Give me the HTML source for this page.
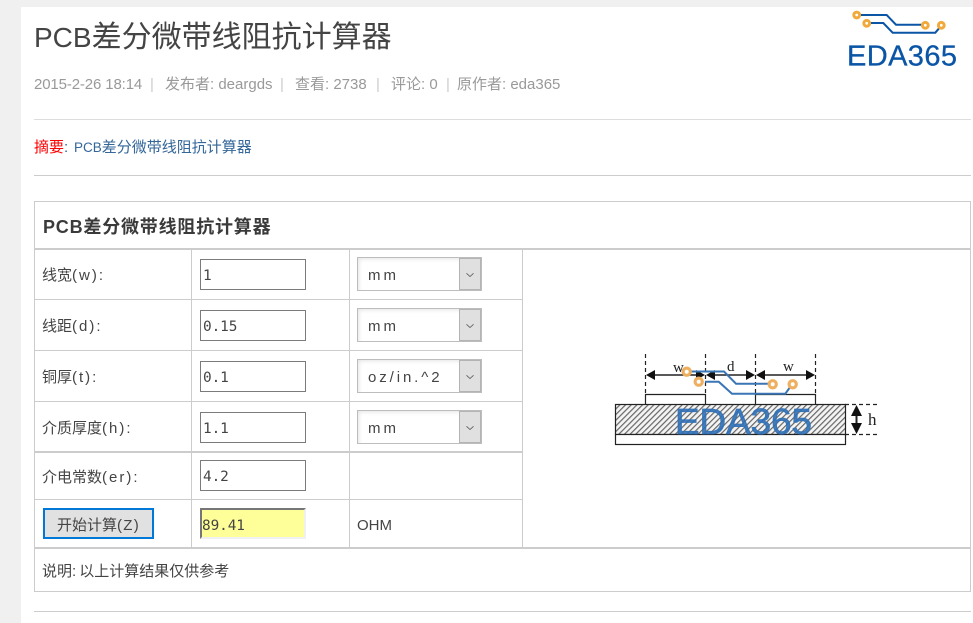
<!DOCTYPE html>
<html lang="zh">
<head>
<meta charset="utf-8">
<title>PCB差分微带线阻抗计算器</title>
<style>
html,body{margin:0;padding:0;width:973px;height:623px;overflow:hidden;background:#f0f0f0}
body{position:relative;font-family:"Liberation Sans","Noto Sans CJK SC",sans-serif;color:#444}
.a{position:absolute;white-space:nowrap}
.l{position:absolute;background:#ccc}
#page{position:absolute;left:21px;top:7px;width:952px;height:616px;background:#fff}
.t{font-size:15px;color:#444;line-height:20px}
.t b{font-weight:400;letter-spacing:2px}
.m{top:75px;font-size:15px;line-height:20px;color:#999}
.m span{position:absolute;color:#ccc;top:0}
.in{position:absolute;left:200px;height:29px;border:1px solid #7b7b7b;background:#fff;font:14.4px/32px "DejaVu Sans Mono","Liberation Mono",monospace;letter-spacing:-.1px;color:#444;padding-left:2px;width:102px;overflow:hidden}
.sel{position:absolute;left:357px;width:123px;height:32px;border:1px solid #bdbdbd;background:#fff;box-shadow:inset 3px 3px 4px -2px #e4e4e4;font-size:15px;line-height:36px;color:#444}
.sel span{position:absolute;left:10px;top:0;letter-spacing:3px;white-space:nowrap}
.sel i{position:absolute;right:0;top:0;width:20px;height:30px;border:1px solid #b4b4b4;background:#e0e0e0}
.sel svg{position:absolute;left:6px;top:14px}
</style>
</head>
<body>
<div id="page"></div>

<div class="a" style="left:34px;top:18px;font-size:30px;line-height:40px;color:#444"><span style="font-size:28px">PCB</span>差分微带线阻抗计算器</div>
<div class="a m" style="left:34px;letter-spacing:-.13px">2015-2-26 18:14<span style="left:116px">|</span></div>
<div class="a m" style="left:165px">发布者: deargds<span style="left:115px">|</span></div>
<div class="a m" style="left:295px">查看: 2738<span style="left:81px">|</span></div>
<div class="a m" style="left:391px">评论: 0<span style="left:55px">|</span></div>
<div class="a m" style="left:457px">原作者: eda365</div>

<svg class="a" style="left:820px;top:0" width="153" height="80" viewBox="820 0 153 80">
  <g fill="none" stroke="#0a55a5" stroke-width="2">
    <path d="M857 15H886.7L896 24.7H925"/>
    <path d="M867 23H883.3L892.7 32.7H935.3L941 26"/>
  </g>
  <g fill="#fff" stroke="#f2a93b" stroke-width="3">
    <circle cx="856.7" cy="15" r="2.9"/>
    <circle cx="866.7" cy="23.3" r="2.9"/>
    <circle cx="925.3" cy="25.3" r="2.9"/>
    <circle cx="941.3" cy="25.3" r="2.9"/>
  </g>
  <text x="847" y="65.5" font-family="Liberation Sans" font-size="29" fill="#0a55a5" stroke="#0a55a5" stroke-width=".3" textLength="110" lengthAdjust="spacing">EDA365</text>
</svg>

<div class="l" style="left:34px;top:119px;width:937px;height:1px;background:#ddd"></div>
<div class="a" style="left:34px;top:138px;font-size:15px;line-height:20px;color:#336699"><span style="color:#f00">摘要</span>:<span style="position:absolute;left:40px;top:0"><span style="font-size:13.5px">PCB</span>差分微带线阻抗计算器</span></div>
<div class="l" style="left:34px;top:175px;width:937px;height:1px"></div>

<!-- table frame -->
<div class="l" style="left:34px;top:201px;width:937px;height:1px"></div>
<div class="l" style="left:34px;top:201px;width:1px;height:391px"></div>
<div class="l" style="left:970px;top:201px;width:1px;height:391px"></div>
<div class="l" style="left:34px;top:591px;width:937px;height:1px"></div>
<div class="l" style="left:34px;top:248px;width:937px;height:2px"></div>
<div class="l" style="left:34px;top:547px;width:937px;height:2px"></div>
<div class="l" style="left:34px;top:299px;width:489px;height:1px"></div>
<div class="l" style="left:34px;top:350px;width:489px;height:1px"></div>
<div class="l" style="left:34px;top:401px;width:489px;height:1px"></div>
<div class="l" style="left:34px;top:451px;width:489px;height:2px"></div>
<div class="l" style="left:34px;top:499px;width:489px;height:1px"></div>
<div class="l" style="left:191px;top:249px;width:1px;height:299px"></div>
<div class="l" style="left:349px;top:249px;width:1px;height:299px"></div>
<div class="l" style="left:522px;top:249px;width:1px;height:299px"></div>

<div class="a" style="left:43px;top:215px;font-size:18px;font-weight:700;line-height:24px;color:#3a3a3a;letter-spacing:.8px">PCB差分微带线阻抗计算器</div>

<div class="a t" style="left:42px;top:266px">线宽<b>(w):</b></div>
<div class="a t" style="left:42px;top:317px">线距<b>(d):</b></div>
<div class="a t" style="left:42px;top:368px">铜厚<b>(t):</b></div>
<div class="a t" style="left:42px;top:419px">介质厚度<b>(h):</b></div>
<div class="a t" style="left:42px;top:468px">介电常数<b>(er):</b></div>

<div class="in" style="top:259px">1</div>
<div class="in" style="top:310px">0.15</div>
<div class="in" style="top:361px">0.1</div>
<div class="in" style="top:412px">1.1</div>
<div class="in" style="top:460px">4.2</div>
<div class="in" style="top:508px;border:0;border-top:2px solid #767676;border-left:2px solid #767676;border-right:2px solid #f0f0f0;border-bottom:2px solid #f0f0f0;height:27px;line-height:32px;background:#ffff99;padding-left:0;width:102px">89.41</div>

<div class="sel" style="top:257px"><span>mm</span><i><svg width="8" height="4" viewBox="0 0 8 4"><path d="M.5 .3L4 3.5L7.5 .3" fill="none" stroke="#555" stroke-width=".8"/></svg></i></div>
<div class="sel" style="top:308px"><span>mm</span><i><svg width="8" height="4" viewBox="0 0 8 4"><path d="M.5 .3L4 3.5L7.5 .3" fill="none" stroke="#555" stroke-width=".8"/></svg></i></div>
<div class="sel" style="top:359px"><span style="letter-spacing:2.9px">oz/in.^2</span><i><svg width="8" height="4" viewBox="0 0 8 4"><path d="M.5 .3L4 3.5L7.5 .3" fill="none" stroke="#555" stroke-width=".8"/></svg></i></div>
<div class="sel" style="top:410px"><span>mm</span><i><svg width="8" height="4" viewBox="0 0 8 4"><path d="M.5 .3L4 3.5L7.5 .3" fill="none" stroke="#555" stroke-width=".8"/></svg></i></div>

<div class="a" style="left:43px;top:508px;width:107px;height:27px;border:2px solid #0078d7;background:#e1e1e1;text-align:center;font-size:15px;line-height:31px;color:#444">开始计算<span style="letter-spacing:1.3px">(Z)</span></div>
<div class="a" style="left:357px;top:516px;font-size:15px;line-height:20px;color:#444">OHM</div>
<div class="a" style="left:42px;top:562px;font-size:15px;line-height:20px;color:#444">说明<span style="letter-spacing:3px">:</span>以上计算结果仅供参考</div>

<div class="l" style="left:34px;top:611px;width:937px;height:1px"></div>

<svg class="a" style="left:600px;top:345px" width="290" height="110" viewBox="600 345 290 110">
  <defs>
    <pattern id="h" width="4" height="4" patternUnits="userSpaceOnUse" patternTransform="rotate(-45)">
      <rect width="4" height="4" fill="#f4f4f4"/>
      <rect width="4" height="1.2" fill="#666"/>
    </pattern>
  </defs>
  <g fill="none" stroke="#222" stroke-width="1.2">
    <path stroke-dasharray="4 3" d="M645.5 354V394M705.5 354V394M755.5 354V394M815.5 354V394"/>
    <path d="M645.5 404V394.5H705.5V404M755.5 404V394.5H815.5V404"/>
    <rect x="615.5" y="404.5" width="230" height="30" fill="url(#h)"/>
    <rect x="615.5" y="434.5" width="230" height="10" fill="#fff"/>
    <path stroke-dasharray="4 3" d="M845 404.5H877M845 434.5H877"/>
    <path stroke-width="1.5" d="M648 375H703M708 375H753M758 375H813"/>
    <path stroke-width="2" d="M856.5 408V431"/>
  </g>
  <g fill="#111">
    <path d="M646 375L655 370V380ZM705 375L696 370V380ZM706 375L715 370V380ZM755 375L746 370V380ZM756 375L765 370V380ZM815 375L806 370V380Z"/>
    <path d="M856.5 405L851 416H862ZM856.5 434L851 423H862Z"/>
  </g>
  <g font-family="Liberation Serif" fill="#222" font-size="15">
    <text x="673" y="372">w</text>
    <text x="727" y="371">d</text>
    <text x="783" y="371">w</text>
    <text x="868" y="425" font-size="17">h</text>
  </g>
  <text x="675" y="434" font-family="Liberation Sans" font-size="36" fill="#2f6fb5" fill-opacity=".9" stroke="#2f6fb5" stroke-opacity=".9" stroke-width=".8" textLength="137" lengthAdjust="spacingAndGlyphs">EDA365</text>
  <g fill="none" stroke="#3a75b5" stroke-width="2">
    <path d="M687 371.5H724L736 383.7H773"/>
    <path d="M705 381.7H718.7L732 393.7H785.3L792 384.5"/>
  </g>
  <g fill="#fff" stroke="#eeb060" stroke-width="3.2">
    <circle cx="686.7" cy="371.7" r="3.6"/>
    <circle cx="698.7" cy="381.7" r="3.6"/>
    <circle cx="772.7" cy="384.3" r="3.6"/>
    <circle cx="792.7" cy="384.3" r="3.6"/>
  </g>
</svg>
</body>
</html>
